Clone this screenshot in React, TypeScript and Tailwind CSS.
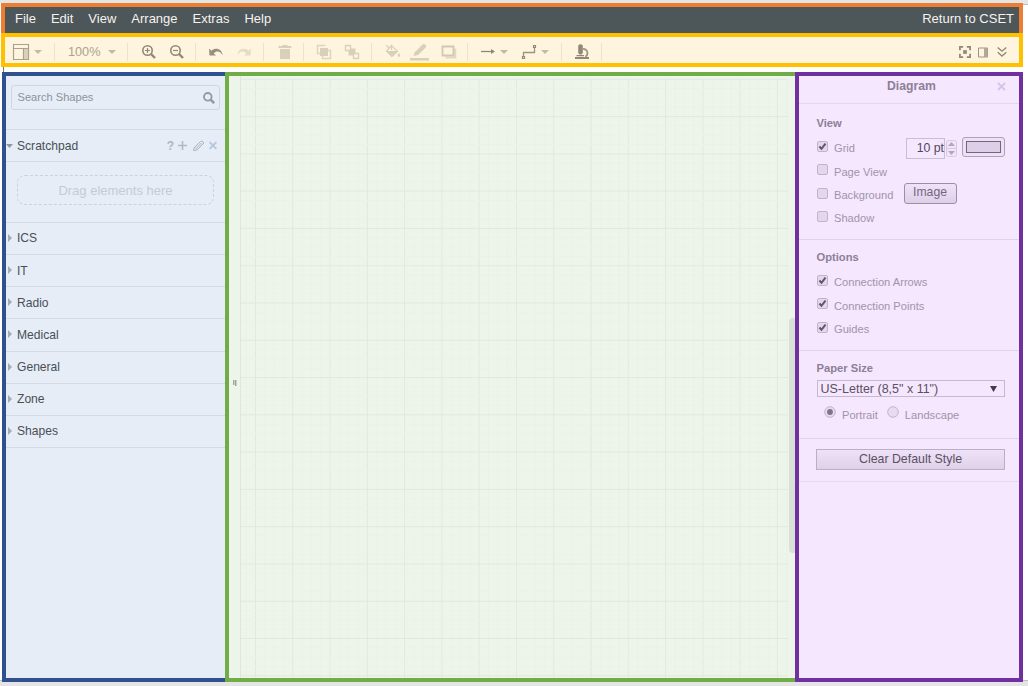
import React from "react";

const BOX = "shrink-0 overflow-visible";

function Sep({ className }: { className: string }) {
  return <div className={`h-[18px] w-px shrink-0 bg-[#ebe3cf] ${className}`} />;
}

function Caret({ className }: { className: string }) {
  return (
    <svg className={`${BOX} h-[4px] w-[8px] ${className}`} viewBox="0 0 8 4">
      <path d="M0 0H8L4 4Z" fill="#c3bba7" />
    </svg>
  );
}

function Icon({ className, children }: { className: string; children: React.ReactNode }) {
  return (
    <svg className={`${BOX} h-4 w-4 ${className}`} viewBox="0 0 16 16" fill="none">
      {children}
    </svg>
  );
}

function MenuBar() {
  return (
    <div className="flex h-[30px] items-center border-x-4 border-t-4 border-[#ed7d31] bg-[#4d5659] pl-[10px] pr-[5px] pb-[3px] text-[13px] text-[#f7f2ef]">
      <span className="mr-[15px]">File</span>
      <span className="mr-[15px]">Edit</span>
      <span className="mr-[15px]">View</span>
      <span className="mr-[15px]">Arrange</span>
      <span className="mr-[15px]">Extras</span>
      <span>Help</span>
      <span className="ml-auto">Return to CSET</span>
    </div>
  );
}

function Toolbar() {
  return (
    <div className="flex h-[34px] items-center border-4 border-[#ffc000] bg-[#fff5de] pt-1">
      <Icon className="ml-2">
        <path d="M.5.5H15.500V15.500H.5Z M.5 4.500H15.500 M10.500 4.500V15.500" stroke="#aaa28e" strokeWidth="1.200" />
        <path d="M11 5H15V15H11Z" fill="#d8d0ba" />
      </Icon>
      <Caret className="ml-[5px]" />
      <Sep className="ml-3" />
      <span className="ml-[13px] w-[34px] text-[12.700px] leading-4 text-[#aaa28f]">100%</span>
      <Caret className="ml-[6px]" />
      <Sep className="ml-[11px]" />
      <Icon className="ml-[13px]">
        <circle cx="6.500" cy="6.500" r="4.700" stroke="#8f8979" strokeWidth="1.600" />
        <path d="M10 10L14 14" stroke="#8f8979" strokeWidth="2.400" />
        <path d="M4 6.500H9M6.500 4V9" stroke="#8f8979" strokeWidth="1.200" />
      </Icon>
      <Icon className="ml-3">
        <circle cx="6.500" cy="6.500" r="4.700" stroke="#8f8979" strokeWidth="1.600" />
        <path d="M10 10L14 14" stroke="#8f8979" strokeWidth="2.400" />
        <path d="M4 6.500H9" stroke="#8f8979" strokeWidth="1.200" />
      </Icon>
      <Sep className="ml-[10px]" />
      <Icon className="ml-3">
        <path d="M1 4.500L1.500 11.500H8L5.700 9.200C9 6.500 12.500 7 14.500 11.500C14.300 5 8 2.700 3.300 6.700Z" fill="#979080" />
      </Icon>
      <Icon className="ml-3">
        <path d="M15 4.500L14.500 11.500H8L10.300 9.200C7 6.500 3.500 7 1.500 11.500C1.700 5 8 2.700 12.700 6.700Z" fill="#e5dcc6" />
      </Icon>
      <Sep className="ml-[11px]" />
      <Icon className="ml-[13px]">
        <path d="M1.500 2H5.500V1H10.500V2H14.500V4H1.500ZM3 5H13V15H3Z" fill="#d9d0bb" />
      </Icon>
      <Sep className="ml-[10px]" />
      <Icon className="ml-3">
        <path d="M9.500 1.500H1.500V9.500H4M12 6.500H14.500V14.500H6.500V12" stroke="#ddd4bf" strokeWidth="1.400" />
        <path d="M4 4H12V12H4Z" fill="#d9d0bb" />
      </Icon>
      <Icon className="ml-3">
        <path d="M4.500 4.500H11.500V11.500H4.500Z" fill="#d9d0bb" />
        <path d="M1.500 1.500H6.500V6.500H1.500ZM9.500 9.500H14.500V14.500H9.500Z" fill="#fff5de" stroke="#d9d0bb" strokeWidth="1.400" />
      </Icon>
      <Sep className="ml-[11px]" />
      <Icon className="ml-[13px]">
        <path d="M1 1L4 4M6.500 1.500L1.500 7L7 12.500L12.500 7.500L6.500 1.500V6" stroke="#d9d0bb" strokeWidth="1.200" />
        <path d="M1 7H12.500L7 13ZM14 9C12 11.500 12.500 12.800 14 12.800S16 11.500 14 9Z" fill="#d9d0bb" />
      </Icon>
      <svg className={`${BOX} ml-[9px] h-4 w-[19px]`} viewBox="0 0 19 16">
        <path d="M3.500 12L4.500 8.500L12.500.5Q14-.5 15.500.8T15.800 3.500L8 11ZM0 14H19V16.500H0Z" fill="#d9d0bb" />
      </svg>
      <Icon className="ml-3">
        <path d="M14.200 4.500V13.500H4.500" stroke="#e2d9c4" strokeWidth="2.200" />
        <path d="M1.500 2.500H12.500V11.500H1.500Z" stroke="#d1c8b3" strokeWidth="1.800" />
      </Icon>
      <Sep className="ml-[10px]" />
      <Icon className="ml-3">
        <path d="M1 7.500H12" stroke="#8f8979" strokeWidth="1.300" />
        <path d="M11 5L15 7.500L11 10Z" fill="#8f8979" />
      </Icon>
      <Caret className="ml-1" />
      <Icon className="ml-[13px]">
        <path d="M2.500 12V8.500H13.500V4" stroke="#9b9483" strokeWidth="1.300" />
        <path d="M1.500 12.500H3.500V14.500H1.500ZM12.500 1.500H14.500V3.500H12.500Z" stroke="#8f8979" strokeWidth="1.200" />
      </Icon>
      <Caret className="ml-1" />
      <Sep className="ml-3" />
      <Icon className="ml-3">
        <path d="M4.200 1.500Q6.500-.8 8.800 1.500V9L7.500 10.500H5.500L4.200 9ZM1 13H15V15H1ZM2.500 11H10V12.300H2.500Z" fill="#8f8979" />
        <path d="M9 4.800C14 5 14.800 10 11.500 13" stroke="#9e9786" strokeWidth="1.700" />
      </Icon>
      <Sep className="ml-[11px]" />
      <svg className={`${BOX} ml-auto mr-[7px] h-[12px] w-[12px]`} viewBox="0 0 13 13" fill="none" stroke="#8f8979" strokeWidth="1.900">
        <path d="M1 4.500V1H4.500M8.500 1H12V4.500M12 8.500V12H8.500M4.500 12H1V8.500" />
        <path d="M4.500 4.500H8.500V8.500H4.500Z" fill="#8f8979" stroke="none" />
      </svg>
      <svg className={`${BOX} mr-[9px] h-[11px] w-[10px]`} viewBox="0 0 10 11">
        <path d="M.5 1H9.500V10H.5Z" fill="none" stroke="#9b9483" />
        <path d="M6 1H9.500V10H6Z" fill="#b1aa98" />
      </svg>
      <svg className={`${BOX} mr-3 h-[10px] w-[10px]`} viewBox="0 0 10 10" fill="none" stroke="#8f8979" strokeWidth="1.400">
        <path d="M.7.5L5 4.200L9.300.5M.7 5.300L5 9L9.300 5.300" />
      </svg>
    </div>
  );
}

const PALETTES = ["ICS", "IT", "Radio", "Medical", "General", "Zone", "Shapes"];

function Sidebar() {
  return (
    <aside className="w-[223px] shrink-0 border-y-4 border-l-4 border-[#2f528f] bg-[#e6edf7]">
      <div className="h-[53px] pl-[5px] pr-[5px] pt-[9px]">
        <div className="flex h-[25px] items-center justify-between rounded-[3px] border border-[#cfd6e0] pl-[5.500px] pr-[4px] text-[11.100px] text-[#8d939b]">
          <span>Search Shapes</span>
          <svg className="h-3 w-3" viewBox="0 0 12 12" fill="none" stroke="#959ba4">
            <circle cx="4.800" cy="4.800" r="3.800" strokeWidth="1.900" />
            <path d="M7.500 7.500L11.200 11.200" strokeWidth="2.500" />
          </svg>
        </div>
      </div>
      <div className="flex h-[33px] items-center border-y border-[#d4dbe5] text-[12.100px] text-[#4a4f56]">
        <svg className="h-1 w-[7px]" viewBox="0 0 7 4"><path d="M0 0H7L3.500 4Z" fill="#9097a2" /></svg>
        <span className="ml-1 pt-px">Scratchpad</span>
        <span className="ml-auto text-[12px] font-bold text-[#b0b6c0]">?</span>
        <svg className="ml-[3px] h-[11px] w-[11px]" viewBox="0 0 11 11"><path d="M5.500 1V10M1 5.500H10" stroke="#b2b9c3" strokeWidth="1.600" /></svg>
        <svg className="ml-[4px] h-3 w-[13px]" viewBox="0 0 13 12" fill="none" stroke="#aab1bc">
          <path d="M1.500 10.500L2.300 7.500L8.500 1.500Q9.700.5 11 1.700T11 4L4.800 10Z M3 7.500L5 9.500M4.500 8L9.500 3" />
        </svg>
        <svg className="ml-[4px] mr-[8px] h-[9px] w-[8px]" viewBox="0 0 8 9"><path d="M.7 1.200L7.300 7.800M7.300 1.200L.7 7.800" stroke="#b4c6e0" strokeWidth="1.900" /></svg>
      </div>
      <div className="h-[60px] pl-[11px] pr-[11px] pt-[13px]">
        <div className="flex h-[30px] items-center justify-center rounded-[8px] border border-dashed border-[#cbd2dc] pt-px text-[13px] text-[#c4cbd6]">Drag elements here</div>
      </div>
      <div className="border-t border-[#d4dbe5] text-[12.100px] text-[#4a4f56]">
        {PALETTES.map((name) => (
          <div key={name} className="flex h-[32.140px] items-center border-b border-[#d4dbe5] pl-[1.500px]">
            <svg className="-mt-px h-2 w-1" viewBox="0 0 4 8"><path d="M0 0L4 4L0 8Z" fill="#a5abb5" /></svg>
            <span className="ml-[5.500px]">{name}</span>
          </div>
        ))}
      </div>
    </aside>
  );
}

const STEP = 9.32;

function DrawingArea() {
  const cols = Array.from({ length: 59 }, (_, i) => i - 1);
  const rows = Array.from({ length: 65 }, (_, i) => i);
  return (
    <main className="flex min-w-0 flex-1 overflow-hidden border-y-4 border-l-4 border-[#70ad47] bg-[#edf5ea]">
      <div className="flex w-[11px] shrink-0 items-start justify-center pt-[304px]">
        <svg className="h-[6px] w-[4px]" viewBox="0 0 4 6"><path d="M.8 0V5M2.800 0V6" stroke="#8e948c" strokeWidth="1.200" /></svg>
      </div>
      <svg className="h-[602px] w-[548px] shrink-0" viewBox="0 0 548 602">
        {cols.map((i) => (
          <rect key={`c${i}`} x={15 + i * STEP} y="3" width="1" height="599" fill={i % 4 === 0 ? "#e1e9de" : "#eaf2e7"} />
        ))}
        {rows.map((i) => (
          <rect key={`r${i}`} x="0" y={2.8 + i * STEP} width="548" height="1" fill={i % 4 === 0 ? "#e1e9de" : "#eaf2e7"} />
        ))}
        <path d="M.5 0V602" stroke="#dfe7dc" />
      </svg>
      <div className="ml-px mt-[242px] h-[235px] w-[6px] shrink-0 rounded-l-[4px] bg-[#d9e1d6]" />
    </main>
  );
}

function Check({ on, label }: { on?: boolean; label: string }) {
  return (
    <div className="flex h-[23.300px] items-center">
      <svg className="-mt-[4px] h-[11px] w-[11px] shrink-0" viewBox="0 0 11 11">
        <rect x=".5" y=".5" width="10" height="10" rx="1.500" fill="#e3d7ec" stroke="#c1b5cb" />
        {on && <path d="M2.400 5.500L4.500 7.800L8.500 2.600" fill="none" stroke="#605669" strokeWidth="2" />}
      </svg>
      <span className="ml-[6.500px]">{label}</span>
    </div>
  );
}

function Radio({ on }: { on?: boolean }) {
  return (
    <svg className="-mt-[6px] h-3 w-3" viewBox="0 0 12 12">
      <circle cx="6" cy="6" r="5.300" fill="#e6dbef" stroke="#c1b5cb" />
      {on && <circle cx="6" cy="6" r="2.900" fill="#817489" />}
    </svg>
  );
}

function FormatPanel() {
  return (
    <aside className="w-[228px] shrink-0 border-4 border-[#7030a0] bg-[#f5e7fe] text-[11.130px] text-[#a194aa]">
      <div className="flex h-[28px] items-start border-b border-[#e4d6ed] pl-[88px] pr-[13px] pt-[1px] text-[12.200px] font-bold leading-[18px] text-[#8c7f96]">
        <span>Diagram</span>
        <svg className="ml-auto mt-[5px] h-[9px] w-[9px]" viewBox="0 0 9 9"><path d="M1 1L8 8M8 1L1 8" stroke="#cfc7e7" strokeWidth="1.800" /></svg>
      </div>
      <section className="flex h-[136px] border-b border-[#e0d2e9] pl-[17.500px]">
        <div className="w-[87px] shrink-0 whitespace-nowrap pt-[11px]">
          <h2 className="mb-[6px] text-[11.200px] font-bold leading-4 text-[#8c7f96]">View</h2>
          <Check on label="Grid" />
          <Check label="Page View" />
          <Check label="Background" />
          <Check label="Shadow" />
        </div>
        <div className="pt-[33px]">
          <div className="flex h-[22px] items-start pl-[2.500px]">
            <div className="mt-[1px] flex h-[21px] w-[39px] items-center justify-end border border-[#cbbdd5] text-[12.300px] text-[#51475a]">10 pt</div>
            <svg className="ml-px mt-[3px] h-[17px] w-[11px]" viewBox="0 0 11 17">
              <rect x=".5" y=".5" width="10" height="16" rx="2" fill="#f2e4fb" stroke="#d7c9e1" />
              <path d="M0 8.500H11" stroke="#d7c9e1" />
              <path d="M2 6H9L5.500 2ZM2 11H9L5.500 15Z" fill="#b3a6bd" />
            </svg>
            <div className="ml-[5px] h-[20px] w-[43px] rounded-[3px] border border-[#aea1b8] bg-[#eee0f7] p-[3px]">
              <div className="h-full w-full border border-[#73677e] bg-[#ddcfe7]" />
            </div>
          </div>
          <div className="mt-[24px] flex h-[21px] w-[53px] items-start justify-center rounded-[3px] border border-[#9b8fa6] bg-linear-to-b from-[#f0e3f9] to-[#ddcfe7] text-[12.200px] leading-[17px] text-[#74687e]">Image</div>
        </div>
      </section>
      <section className="h-[111px] border-b border-[#e0d2e9] pl-[17.500px] pt-[9px]">
        <h2 className="mb-[6px] text-[11.200px] font-bold leading-4 text-[#8c7f96]">Options</h2>
        <Check on label="Connection Arrows" />
        <Check on label="Connection Points" />
        <Check on label="Guides" />
      </section>
      <section className="h-[88px] border-b border-[#e0d2e9] pl-[17.500px] pr-[14px] pt-[9px]">
        <h2 className="text-[11.200px] font-bold leading-4 text-[#8c7f96]">Paper Size</h2>
        <div className="mt-[4px] flex h-[17px] items-center justify-between border border-[#c5b8cf] pl-[3px] pr-[7px] text-[12.500px] text-[#5b5064]">
          <span className="pt-px">US-Letter (8,5" x 11")</span>
          <svg className="h-[6px] w-[7px]" viewBox="0 0 7 6"><path d="M0 0H7L3.500 6Z" fill="#44394d" /></svg>
        </div>
        <div className="mt-[8px] flex h-[20px] items-center pl-[7.500px]">
          <Radio on />
          <span className="ml-[6px] mr-[9px]">Portrait</span>
          <Radio />
          <span className="ml-[6px]">Landscape</span>
        </div>
      </section>
      <section className="h-[43px] border-b border-[#e7d9f0] pl-[17px] pr-[14px] pt-[10px]">
        <div className="flex h-[21px] items-center justify-center border border-[#bcaec6] bg-linear-to-b from-[#efe1f8] to-[#dfd1e8] text-[12.360px] text-[#5b5064]">Clear Default Style</div>
      </section>
    </aside>
  );
}

export default function App() {
  return (
    <div className="flex h-[686px] w-[1028px] flex-col overflow-hidden bg-white font-['Liberation_Sans',Arial,sans-serif]">
      <div className="h-[3px] shrink-0 bg-[#e5e5e5]" />
      <div className="flex h-[64px] shrink-0">
        <div className="w-px bg-white" />
        <div className="w-[1022px]">
          <MenuBar />
          <Toolbar />
        </div>
        <div className="h-[2px] flex-1 border-b border-[#bdbdbd] bg-[#e5e5e5]" />
      </div>
      <div className="ml-[3px] h-[5px] shrink-0 border-l border-[#777777] bg-white" />
      <div className="flex h-[610px] shrink-0 items-end">
        <div className="h-[2px] w-[2px] border-t border-[#bdbdbd] bg-[#e5e5e5]" />
        <div className="flex h-[610px] w-[1021px] shrink-0">
          <Sidebar />
          <DrawingArea />
          <FormatPanel />
        </div>
        <div className="h-[2px] flex-1 border-t border-[#bdbdbd] bg-[#e5e5e5]" />
      </div>
      <div className="flex-1 bg-[#e5e5e5]" />
    </div>
  );
}
